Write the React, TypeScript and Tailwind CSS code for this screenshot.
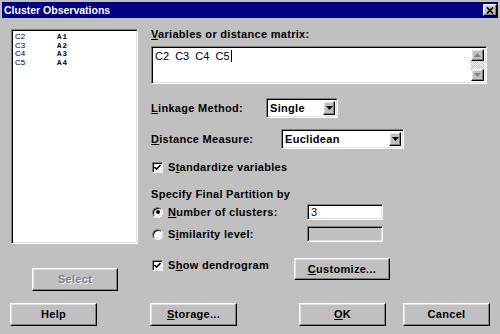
import type { ReactNode } from "react";

const sunken =
  "border border-t-[#808080] border-l-[#808080] border-b-white border-r-white shadow-[inset_1px_1px_0_#000,inset_-1px_-1px_0_#dfdfdf]";
const raised =
  "border border-t-white border-l-white border-b-black border-r-black shadow-[inset_-1px_-1px_0_#808080,inset_1px_1px_0_#dfdfdf]";

const items = [
  ["C2", "A1"],
  ["C3", "A2"],
  ["C4", "A3"],
  ["C5", "A4"],
];

function Btn({ w, h, children, disabled }: { w: string; h: string; children: ReactNode; disabled?: boolean }) {
  return (
    <div
      className={`${raised} ${w} ${h} bg-[#c0c0c0] flex items-center justify-center font-bold tracking-[0.3px] ${
        disabled ? "text-[#808080] [text-shadow:1px_1px_0_#fff]" : "text-black"
      }`}
    >
      {children}
    </div>
  );
}

function Arrow({ up, color }: { up?: boolean; color: string }) {
  return (
    <svg width="7" height="4" viewBox="0 0 7 4">
      <path d={up ? "M3.5 0 L7 4 L0 4 Z" : "M0 0 L7 0 L3.5 4 Z"} fill={color} />
    </svg>
  );
}

function Select({ w, value }: { w: string; value: string }) {
  return (
    <div className={`${sunken} ${w} h-[20px] bg-white flex items-center p-[2px]`}>
      <span className="flex-1 pl-[1px] font-bold tracking-[0.3px]">{value}</span>
      <div className={`${raised} w-[12px] h-full bg-[#c0c0c0] flex items-center justify-center`}>
        <Arrow color="#000" />
      </div>
    </div>
  );
}

function Check({ children }: { children: ReactNode }) {
  return (
    <div className="flex items-center h-[13px] gap-[5px]">
      <div className={`${sunken} w-[11px] h-[11px] bg-white flex items-center justify-center`}>
        <svg width="7" height="7" viewBox="0 0 7 7">
          <path d="M0.5 3 L2.5 5.2 L6.5 1" stroke="#000" strokeWidth="1.6" fill="none" />
        </svg>
      </div>
      <span className="font-bold tracking-[0.3px]">{children}</span>
    </div>
  );
}

function Radio({ checked, children }: { checked?: boolean; children: ReactNode }) {
  return (
    <div className="flex items-center gap-[5px]">
      <div className={`${sunken} w-[11px] h-[11px] rounded-full bg-white flex items-center justify-center`}>
        {checked && <div className="w-[4px] h-[4px] rounded-full bg-black" />}
      </div>
      <span className="font-bold tracking-[0.3px]">{children}</span>
    </div>
  );
}

export default function App() {
  return (
    <div className="w-[500px] h-[334px] overflow-hidden bg-[#c0c0c0] pt-[2px] px-[2px] font-['Liberation_Sans',sans-serif] text-[11px] leading-[13px] text-black">
      <div className="h-[16px] bg-[#000080] flex items-center justify-between pl-[2px] pr-[1px]">
        <span className="text-white font-bold text-[10.5px]">Cluster Observations</span>
        <div className={`${raised} w-[14px] h-[12px] bg-[#c0c0c0] flex items-center justify-center`}>
          <svg width="8" height="7" viewBox="0 0 8 7">
            <path d="M1 0.5 L7 6.5 M7 0.5 L1 6.5" stroke="#000" strokeWidth="1.6" />
          </svg>
        </div>
      </div>

      <div className="flex pt-[11px]">
        <div className="ml-[9px] w-[127px] flex flex-col">
          <div className={`${sunken} h-[215px] bg-white pl-[3px] pt-[3px]`}>
            {items.map(([c, a]) => (
              <div key={c} className="flex h-[8.5px] items-center text-[8px] leading-[8.5px]">
                <span className="w-[42px] text-[8px]">{c}</span>
                <span className="font-['Liberation_Mono',monospace] font-bold tracking-[1px] text-[7.5px]">{a}</span>
              </div>
            ))}
          </div>
          <div className="ml-[21px] mt-[24px]">
            <Btn w="w-[86px]" h="h-[23px]" disabled>
              Select
            </Btn>
          </div>
        </div>

        <div className="ml-[13px] w-[336px] flex flex-col">
          <div className="-mt-[1px] font-bold tracking-[0.3px]">
            <u>V</u>ariables or distance matrix:
          </div>
          <div className={`${sunken} mt-[5px] h-[38px] bg-white flex p-[2px]`}>
            <div className="flex-1 pl-[1px] pt-[1px] whitespace-pre flex items-start">
              <span>C2  C3  C4  C5</span>
              <span className="w-[1px] h-[12px] bg-black ml-[1px]" />
            </div>
            <div className="w-[13px] flex flex-col">
              <div className={`${raised} h-[12px] bg-[#c0c0c0] flex items-center justify-center`}>
                <Arrow up color="#808080" />
              </div>
              <div className="flex-1 bg-[repeating-conic-gradient(#c0c0c0_0_25%,#fff_0_50%)] bg-[length:2px_2px]" />
              <div className={`${raised} h-[12px] bg-[#c0c0c0] flex items-center justify-center`}>
                <Arrow color="#808080" />
              </div>
            </div>
          </div>

          <div className="mt-[14px] flex items-center">
            <span className="w-[115px] font-bold tracking-[0.3px]">
              <u>L</u>inkage Method:
            </span>
            <Select w="w-[72px]" value="Single" />
          </div>

          <div className="mt-[11px] flex items-center">
            <span className="w-[130px] font-bold tracking-[0.3px]">
              <u>D</u>istance Measure:
            </span>
            <Select w="w-[123px]" value="Euclidean" />
          </div>

          <div className="mt-[12px] ml-[1px]">
            <Check>
              S<u>t</u>andardize variables
            </Check>
          </div>

          <div className="mt-[14px] font-bold tracking-[0.3px]">Specify Final Partition by</div>

          <div className="mt-[3px] flex items-center">
            <div className="w-[155px] ml-[1px]">
              <Radio checked>
                <u>N</u>umber of clusters:
              </Radio>
            </div>
            <div className={`${sunken} w-[76px] h-[16px] bg-white pl-[3px] flex items-center`}>3</div>
          </div>

          <div className="mt-[6px] flex items-center">
            <div className="w-[155px] ml-[1px]">
              <Radio>
                S<u>i</u>milarity level:
              </Radio>
            </div>
            <div className={`${sunken} w-[76px] h-[16px] bg-[#c0c0c0]`} />
          </div>

          <div className="mt-[16px] flex items-start">
            <div className="w-[142px] ml-[1px] pt-[1px]">
              <Check>
                S<u>h</u>ow dendrogram
              </Check>
            </div>
            <Btn w="w-[96px]" h="h-[22px]">
              <span>
                <u>C</u>ustomize...
              </span>
            </Btn>
          </div>
        </div>
      </div>

      <div className="mt-[12px] flex">
        <div className="ml-[8px]">
          <Btn w="w-[87px]" h="h-[23px]">Help</Btn>
        </div>
        <div className="ml-[53px]">
          <Btn w="w-[87px]" h="h-[23px]">
            <span>
              <u>S</u>torage...
            </span>
          </Btn>
        </div>
        <div className="ml-[62px]">
          <Btn w="w-[87px]" h="h-[23px]">
            <span>
              <u>O</u>K
            </span>
          </Btn>
        </div>
        <div className="ml-[17px]">
          <Btn w="w-[87px]" h="h-[23px]">Cancel</Btn>
        </div>
      </div>
    </div>
  );
}
